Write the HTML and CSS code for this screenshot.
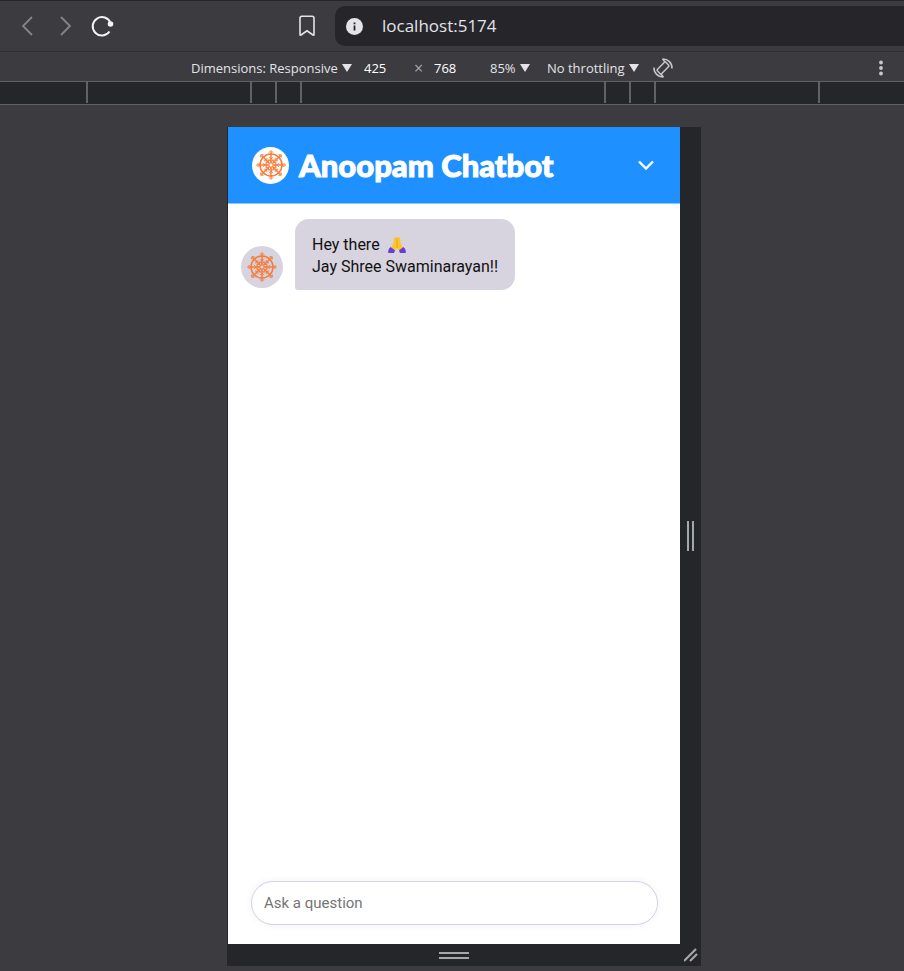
FILE: index.html
```html
<!DOCTYPE html>
<html lang="en">
<head>
<meta charset="utf-8">
<meta name="viewport" content="width=device-width, initial-scale=1">
<title>Anoopam Chatbot</title>
<link rel="stylesheet" href="styles.css">
</head>
<body>
<svg class="defs" aria-hidden="true">
  <defs>
    <g id="spoke">
      <path d="M0-2V-12" stroke-width="1.500"/>
      <path d="M-2-12.500 0-14.500 2-12.500M-2.200-8 0-6 2.200-8M-2.200-5.500 0-3.500 2.200-5.500"/>
      <circle cy="-12.500" r=".8"/>
    </g>
    <symbol id="wheel" viewBox="-15 -15 30 30">
      <g fill="none" stroke="#f57c3a" stroke-width=".9">
        <circle r="11" stroke-width="1.500"/>
        <circle r="5" stroke-dasharray="2 1"/>
        <circle r="2"/>
        <use href="#spoke"/>
        <use href="#spoke" transform="rotate(45)"/>
        <use href="#spoke" transform="rotate(90)"/>
        <use href="#spoke" transform="rotate(135)"/>
        <use href="#spoke" transform="rotate(180)"/>
        <use href="#spoke" transform="rotate(225)"/>
        <use href="#spoke" transform="rotate(270)"/>
        <use href="#spoke" transform="rotate(315)"/>
      </g>
    </symbol>
    <symbol id="caret" viewBox="0 0 10 8"><path d="M0 0h10L5 8z" fill="#e3e3e8"/></symbol>
  </defs>
</svg>

<nav class="browser-bar" aria-label="Browser">
  <button class="icon-button" aria-label="Back"><svg width="20" height="22" viewBox="0 0 20 22"><path d="M14 2 5 11l9 9" fill="none" stroke="#85848a" stroke-width="1.800"/></svg></button>
  <button class="icon-button" aria-label="Forward"><svg width="20" height="22" viewBox="0 0 20 22"><path d="m7 2 9 9-9 9" fill="none" stroke="#85848a" stroke-width="1.800"/></svg></button>
  <button class="icon-button" aria-label="Reload"><svg width="24" height="24" viewBox="0 0 24 24"><path d="M20.500 9A9.200 9.200 0 1 0 19.500 17.500" fill="none" stroke="#f2f2f4" stroke-width="2"/><circle cx="20.500" cy="10" r="2.800" fill="#f2f2f4"/></svg></button>
  <button class="icon-button bookmark" aria-label="Bookmark"><svg width="18" height="22" viewBox="0 0 18 22"><path d="M4 1.200h10q2 0 2 2v16.300q0 1.300-1 .5L9 15.800 3 20q-1 .8-1-.5V3.200q0-2 2-2z" fill="none" stroke="#e3e3e8" stroke-width="1.600"/></svg></button>
  <div class="address">
    <svg width="17" height="17" viewBox="0 0 17 17" aria-hidden="true"><circle cx="8.500" cy="8.500" r="8.500" fill="#e3e3e8"/><path d="M7.600 7.500h1.800V12.500H7.600zM7.600 4.500h1.800v1.800H7.600z" fill="#25252a"/></svg>
    <input class="address-input" aria-label="Address" value="localhost:5174">
  </div>
</nav>

<div class="device-bar">
  <div class="picker dimensions"><select aria-label="Dimensions"><option>Dimensions: Responsive</option></select><svg class="caret" aria-hidden="true"><use href="#caret"/></svg></div>
  <input class="size" aria-label="Width" value="425">
  <span class="times">×</span>
  <input class="size" aria-label="Height" value="768">
  <div class="picker zoom"><select aria-label="Zoom"><option>85%</option></select><svg class="caret" aria-hidden="true"><use href="#caret"/></svg></div>
  <div class="picker throttling"><select aria-label="Throttling"><option>No throttling</option></select><svg class="caret" aria-hidden="true"><use href="#caret"/></svg></div>
  <button class="icon-button rotate" aria-label="Rotate"><svg width="20" height="20" viewBox="0 0 20 20" fill="none" stroke="#c7c7cc" stroke-width="1.500"><rect x="7" y="4" width="6" height="12" rx="1" transform="rotate(45 10 10)"/><path d="M1 9.500a9 9 0 0 0 9.500 9.500M7.500 15.500l3 3.500M19 10.500A9 9 0 0 0 9.500 1M12.500 4.500l-3-3.500"/></svg></button>
  <button class="icon-button more" aria-label="More options"><svg width="4" height="16" viewBox="0 0 4 16" fill="#c7c7cc"><circle cx="2" cy="2.500" r="1.900"/><circle cx="2" cy="8" r="1.900"/><circle cx="2" cy="13.500" r="1.900"/></svg></button>
</div>

<div class="ruler" aria-hidden="true">
  <i class="band outer"></i><i class="band narrow"></i><i class="band narrow"></i><i class="band center"></i><i class="band narrow"></i><i class="band narrow"></i><i class="band outer last"></i>
</div>

<main class="stage">
  <div class="device">
    <section class="chat">
      <header class="chat-header">
        <span class="logo"><svg width="30" height="30" aria-hidden="true"><use href="#wheel"/></svg></span>
        <h1>Anoopam Chatbot</h1>
        <button class="icon-button collapse" aria-label="Collapse"><svg width="18" height="10" viewBox="0 0 18 10"><path d="m2 1.500 7 7 7-7" fill="none" stroke="#fff" stroke-width="2.400"/></svg></button>
      </header>
      <div class="messages">
        <div class="message">
          <span class="avatar"><svg width="30" height="30" aria-hidden="true"><use href="#wheel"/></svg></span>
          <p class="bubble">Hey there <svg class="hands" viewBox="0 0 18 16" role="img" aria-label="Folded hands"><path d="M7 0Q8.200 0 8.800.8 9.600 0 10.800 0 12 0 12.200 2l.6 5L16 12l-3.500 3.500L9 11l-3.500 4.500L2 12 5.200 7 5.800 2Q6 0 7 0z" fill="#ffc52e"/><path d="M9 1v10" stroke="#f09a26" stroke-width=".8"/><path d="M2.500 10 7 13.200 6 16H1Q0 16 0 15 0 12 2.500 10zM15.500 10 11 13.200l1 2.800h5q1 0 1-1 0-3-2.500-5z" fill="#673edb"/></svg><br>Jay Shree Swaminarayan!!</p>
        </div>
      </div>
      <form class="composer">
        <input class="question" aria-label="Ask a question" placeholder="Ask a question">
      </form>
    </section>
    <div class="handle side"><svg width="8" height="30" viewBox="0 0 8 30" aria-hidden="true"><path d="M1 0v30M6 0v30" stroke="#a5a8a8" stroke-width="2"/></svg></div>
    <div class="handle bottom"><svg width="30" height="8" viewBox="0 0 30 8" aria-hidden="true"><path d="M0 2h30M0 7h30" stroke="#a5a8a8" stroke-width="2"/></svg></div>
    <div class="handle corner"><svg width="14" height="14" viewBox="0 0 14 14" aria-hidden="true"><path d="M0 13 12 1M6 13l7-7" stroke="#a5a8a8" stroke-width="2.200"/></svg></div>
  </div>
</main>
</body>
</html>
```
FILE: styles.css
```css
* { box-sizing: border-box; }

body {
  margin: 0;
  min-height: 100vh;
  display: flex;
  flex-direction: column;
  background: #3c3b3f;
  color: #e3e3e8;
  font: 13px/20px "Open Sans", sans-serif;
}

.defs { position: absolute; width: 0; height: 0; }

svg { display: block; flex: none; }

input, select, button {
  font: inherit;
  color: inherit;
  border: 0;
  margin: 0;
  padding: 0;
  background: none;
}

.icon-button { display: grid; place-items: center; flex: none; }

/* Browser chrome */
.browser-bar {
  display: flex;
  align-items: center;
  height: 52px;
  padding-left: 18px;
  gap: 16px;
  border-top: 1px solid #25252a;
  border-bottom: 1px solid #302f33;
}

.bookmark { margin-left: 168px; }

.address {
  flex: 1;
  display: flex;
  align-items: center;
  gap: 19px;
  height: 40px;
  padding-left: 11px;
  margin-left: 3px;
  background: #25252a;
  border-radius: 10px 0 0 10px;
}

.address-input { flex: 1; min-width: 0; font-size: 17px; line-height: 24px; }

/* Device toolbar */
.device-bar {
  display: flex;
  align-items: center;
  height: 30px;
  padding: 2px 21px 0 191px;
  border-bottom: 1px solid #626165;
}

.picker { display: flex; align-items: center; gap: 4px; }
.picker select { appearance: none; }
.caret { width: 10px; height: 8px; }
.size { width: 50px; color: #fff; }
.dimensions { margin-right: 12px; }
.times { width: 20px; color: #a9a9ae; font-size: 16px; }
.size + .zoom { margin-left: 6px; }
.throttling { margin-left: 17px; }
.rotate { margin-left: 14px; }
.more { margin-left: auto; }

/* Breakpoint ruler */
.ruler {
  display: flex;
  justify-content: center;
  height: 23px;
  padding: 0 0 1px 2px;
  background: #25262a;
  border-bottom: 1px solid #626165;
}

.band { border-left: 2px solid #626165; }
.outer { width: 164px; }
.narrow { width: 25px; }
.center { width: 304px; }
.last { width: 166px; border-right: 2px solid #626165; }

/* Emulated device */
.stage {
  flex: 1;
  display: flex;
  justify-content: center;
  padding: 22px 0 5px 24px;
}

.device {
  display: grid;
  grid-template: 1fr 22px / 1fr 21px;
  width: 100%;
  max-width: 474px;
  padding-left: 1px;
  background: #25262a;
}

.handle { display: grid; place-items: center; }

.chat {
  display: flex;
  flex-direction: column;
  background: #fff;
  color: #111;
  font: 16px/22px Roboto, sans-serif;
}

.chat-header {
  display: flex;
  align-items: center;
  gap: 10px;
  height: 77px;
  padding: 0 24px;
  border-bottom: 1px solid #8ec8ff;
  background: #1e90ff;
  color: #fff;
}

.logo, .avatar { display: grid; place-items: center; flex: none; border-radius: 50%; }
.logo { width: 37px; height: 37px; background: #fff; }

h1 {
  margin: 0;
  font: 900 31px/40px Lato, sans-serif;
  -webkit-text-stroke: 1px #fff;
}

.collapse { margin-left: auto; width: 20px; height: 20px; }

.messages { flex: 1; padding: 15px 13px; }
.message { display: flex; align-items: flex-end; gap: 12px; }
.avatar { width: 42px; height: 42px; margin-bottom: 2px; background: #d7d3df; }

.bubble {
  margin: 0;
  padding: 15px 17px 12px;
  background: #d7d3df;
  border-radius: 14px 14px 14px 3px;
}

.hands { display: inline-block; width: 18px; height: 16px; margin-left: 4px; vertical-align: -3px; }

.composer { padding: 0 22px 19px 23px; }

.question {
  display: block;
  width: 100%;
  height: 44px;
  padding: 0 12px;
  border: 1px solid #d3d0e8;
  border-radius: 22px;
  background: #fff;
  box-shadow: 0 0 8px rgba(0, 0, 0, 0.06);
  font-size: 15px;
}

.question::placeholder { color: #757575; opacity: 1; }
```
